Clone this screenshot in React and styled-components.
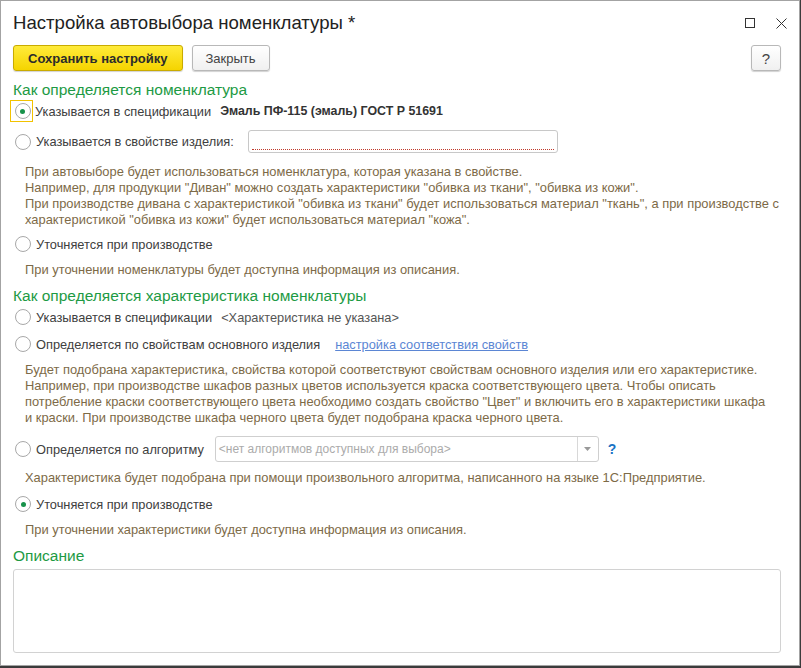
import React from 'react';
import styled, { createGlobalStyle } from 'styled-components';

const Global = createGlobalStyle`
    html, body {
        margin: 0;
        padding: 0;
        background: #3b3b3b;
    }
    body {
        font-family: "Liberation Sans", Arial, sans-serif;
        font-size: 12.8px;
        color: #404040;
    }
`;

const App = () => {
    return (
        <>
            <Global />
            <Window>
                <TitleBar>
                    <Title>Настройка автовыбора номенклатуры *</Title>
                    <WinButtons>
                        <svg width="10" height="10" viewBox="0 0 10 10">
                            <rect x="0.5" y="0.5" width="9" height="9" fill="none" stroke="#333" strokeWidth="1" />
                        </svg>
                        <svg width="11" height="11" viewBox="0 0 11 11">
                            <path d="M0.5 0.5 L10.5 10.5 M10.5 0.5 L0.5 10.5" stroke="#333" strokeWidth="1" />
                        </svg>
                    </WinButtons>
                </TitleBar>

                <Toolbar>
                    <Button primary>Сохранить настройку</Button>
                    <Button>Закрыть</Button>
                    <Spacer />
                    <Button narrow>?</Button>
                </Toolbar>

                <Content>
                    <Heading top={9}>Как определяется номенклатура</Heading>
                    <Row>
                        <Focus><Radio checked /></Focus>
                        <Label>Указывается в спецификации</Label>
                        <Value>Эмаль ПФ-115 (эмаль) ГОСТ Р 51691</Value>
                    </Row>
                    <Row top={8} h={23}>
                        <Radio />
                        <Label>Указывается в свойстве изделия:</Label>
                        <Input />
                    </Row>
                    <Desc top={11}>
                        При автовыборе будет использоваться номенклатура, которая указана в свойстве.<br />
                        Например, для продукции "Диван" можно создать характеристики "обивка из ткани", "обивка из кожи".<br />
                        При производстве дивана с характеристикой "обивка из ткани" будет использоваться материал "ткань", а при производстве с<br />
                        характеристикой "обивка из кожи" будет использоваться материал "кожа".
                    </Desc>
                    <Row top={5}>
                        <Radio />
                        <Label>Уточняется при производстве</Label>
                    </Row>
                    <Desc top={7}>При уточнении номенклатуры будет доступна информация из описания.</Desc>

                    <Heading top={8}>Как определяется характеристика номенклатуры</Heading>
                    <Row>
                        <Radio />
                        <Label>Указывается в спецификации</Label>
                        <Muted>&lt;Характеристика не указана&gt;</Muted>
                    </Row>
                    <Row top={5}>
                        <Radio />
                        <Label>Определяется по свойствам основного изделия</Label>
                        <Link>настройка соответствия свойств</Link>
                    </Row>
                    <Desc top={7}>
                        Будет подобрана характеристика, свойства которой соответствуют свойствам основного изделия или его характеристике.<br />
                        Например, при производстве шкафов разных цветов используется краска соответствующего цвета. Чтобы описать<br />
                        потребление краски соответствующего цвета необходимо создать свойство "Цвет" и включить его в характеристики шкафа<br />
                        и краски. При производстве шкафа черного цвета будет подобрана краска черного цвета.
                    </Desc>
                    <Row top={10} h={26}>
                        <Radio />
                        <Label>Определяется по алгоритму</Label>
                        <Combo>
                            <ComboText>&lt;нет алгоритмов доступных для выбора&gt;</ComboText>
                            <ComboArrow>
                                <svg width="7" height="4" viewBox="0 0 7 4">
                                    <path d="M0 0 L7 0 L3.5 4 Z" fill="#999" />
                                </svg>
                            </ComboArrow>
                        </Combo>
                        <Hint>?</Hint>
                    </Row>
                    <Desc top={8}>Характеристика будет подобрана при помощи произвольного алгоритма, написанного на языке 1С:Предприятие.</Desc>
                    <Row top={7}>
                        <Radio checked />
                        <Label>Уточняется при производстве</Label>
                    </Row>
                    <Desc top={7}>При уточнении характеристики будет доступна информация из описания.</Desc>

                    <Heading top={8}>Описание</Heading>
                    <TextArea />
                </Content>
            </Window>
        </>
    );
}

export default App;

const Window = styled.div`
    box-sizing: border-box;
    width: 800px;
    height: 666px;
    background: #fff;
    border: 1px solid #a3a3a3;
    display: flex;
    flex-direction: column;
`;

const TitleBar = styled.div`
    height: 44px;
    display: flex;
    align-items: center;
    padding: 0 12px 0 12px;
`;

const Title = styled.div`
    flex: 1;
    font-size: 18.6px;
    color: #222;
    white-space: nowrap;
`;

const WinButtons = styled.div`
    display: flex;
    align-items: center;
    gap: 21px;

    svg {
        display: block;
    }
`;

const Toolbar = styled.div`
    height: 26px;
    display: flex;
    align-items: stretch;
    gap: 9px;
    padding: 0 18px 0 12px;
`;

const Spacer = styled.div`
    flex: 1;
`;

const Button = styled.div`
    box-sizing: border-box;
    display: flex;
    align-items: center;
    justify-content: center;
    padding: 0 ${p => (p.narrow ? '0' : p.primary ? '14px' : '13px')};
    width: ${p => (p.narrow ? '30px' : 'auto')};
    border-radius: 3px;
    font-size: ${p => (p.narrow ? '15px' : '13px')};
    white-space: nowrap;
    font-weight: ${p => (p.primary ? 'bold' : 'normal')};
    color: ${p => (p.primary ? '#2b2b2b' : '#444')};
    border: 1px solid ${p => (p.primary ? '#c9ab00' : '#b8b8b8')};
    background: ${p => (p.primary
        ? 'linear-gradient(#ffeb3a, #f5d400)'
        : 'linear-gradient(#ffffff, #f0f0f0)')};
    box-shadow: 0 1px 1px rgba(0, 0, 0, 0.18);
`;

const Content = styled.div`
    display: flex;
    flex-direction: column;
    padding: 0 18px 0 12px;
`;

const Heading = styled.div`
    margin-top: ${p => p.top || 0}px;
    height: 20px;
    line-height: 20px;
    font-size: 15.5px;
    color: #1d9a44;
    white-space: nowrap;
`;

const Row = styled.div`
    margin-top: ${p => p.top || 0}px;
    height: ${p => p.h || 22}px;
    display: flex;
    align-items: center;
    white-space: nowrap;
`;

const Focus = styled.div`
    box-sizing: border-box;
    width: 23px;
    height: 22px;
    margin: 0 -3px 0 -3px;
    border: 1px solid #f2c200;
    display: flex;
    align-items: center;
    justify-content: center;
`;

const Radio = styled.span`
    box-sizing: border-box;
    width: 16px;
    height: 16px;
    margin-left: 2px;
    border-radius: 50%;
    border: 1px solid #a8a8a8;
    background: #fff;
    display: flex;
    align-items: center;
    justify-content: center;
    flex-shrink: 0;

    &::after {
        content: '';
        width: 5px;
        height: 5px;
        border-radius: 50%;
        background: ${p => (p.checked ? '#17924a' : 'transparent')};
    }
`;

const Label = styled.span`
    margin-left: 5px;
    color: #404040;
`;

const Value = styled.span`
    margin-left: 9px;
    font-size: 12.4px;
    font-weight: bold;
    color: #333;
`;

const Muted = styled.span`
    margin-left: 9px;
    color: #555;
`;

const Link = styled.span`
    margin-left: 15px;
    color: #5b86d4;
    text-decoration: underline;
`;

const Input = styled.div`
    box-sizing: border-box;
    margin-left: 14px;
    width: 310px;
    height: 23px;
    border: 1px solid #c8c8c8;
    border-radius: 3px;
    padding: 0 3px 2px 3px;
    display: flex;
    align-items: flex-end;

    &::after {
        content: '';
        flex: 1;
        border-bottom: 1px dotted #c0392b;
    }
`;

const Desc = styled.div`
    margin-top: ${p => p.top || 0}px;
    padding-left: 12px;
    line-height: 16px;
    font-size: 12.9px;
    color: #7d6a47;
    white-space: nowrap;
`;

const Combo = styled.div`
    box-sizing: border-box;
    margin-left: 11px;
    width: 384px;
    height: 26px;
    border: 1px solid #cfcfcf;
    border-radius: 3px;
    display: flex;
    align-items: stretch;
`;

const ComboText = styled.div`
    flex: 1;
    display: flex;
    align-items: center;
    padding-left: 3px;
    font-size: 12px;
    color: #ababab;
`;

const ComboArrow = styled.div`
    width: 20px;
    border-left: 1px solid #d8d8d8;
    display: flex;
    align-items: center;
    justify-content: center;

    svg {
        display: block;
    }
`;

const Hint = styled.span`
    margin-left: 9px;
    font-size: 14px;
    font-weight: bold;
    color: #1a73c4;
`;

const TextArea = styled.div`
    box-sizing: border-box;
    margin-top: 3px;
    height: 84px;
    border: 1px solid #d2d2d2;
    border-radius: 3px;
`;
